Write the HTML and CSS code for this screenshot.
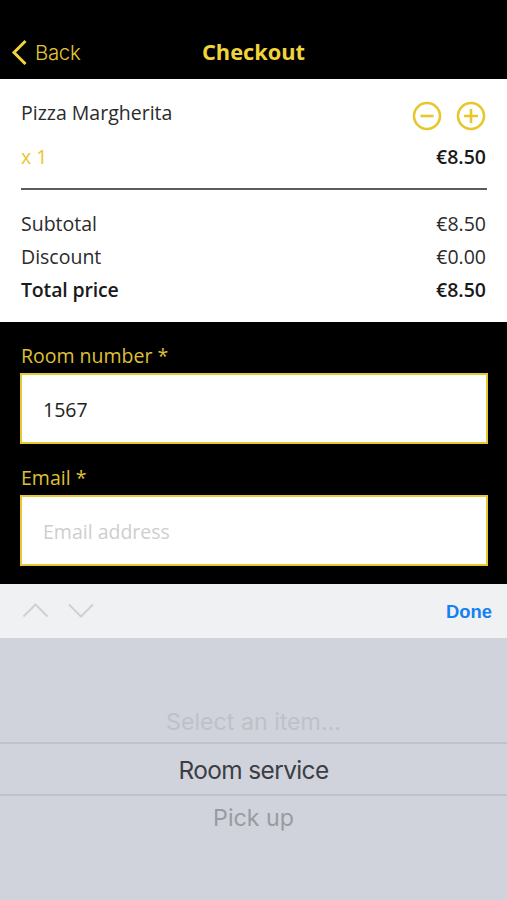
FILE: index.html
```
<!DOCTYPE html>
<html lang="en">
	<head>
		<meta charset="utf-8">
		<title>Checkout</title>
		<link rel="stylesheet" href="styles.css">
	</head>
	<body>
		<header>
			<a class="back" href="#">
				<svg width="16" height="26" viewBox="0 0 16 26"><path d="M14.5 2L3 13.5L14.5 25"/></svg>
				<span>Back</span>
			</a>
			<h1>Checkout</h1>
		</header>

		<section class="order">
			<div class="row item">
				<span>Pizza Margherita</span>
				<div class="amount">
					<svg width="30" height="30" viewBox="0 0 30 30"><circle cx="15" cy="15" r="13"/><path d="M8.5 15H21.5"/></svg>
					<svg width="30" height="30" viewBox="0 0 30 30"><circle cx="15" cy="15" r="13"/><path d="M8 15H22M15 8V22"/></svg>
				</div>
			</div>
			<div class="row price">
				<span class="count">x 1</span>
				<strong>€8.50</strong>
			</div>
			<div class="totals">
				<div class="row"><span>Subtotal</span><span>€8.50</span></div>
				<div class="row"><span>Discount</span><span>€0.00</span></div>
				<div class="row total"><span>Total price</span><span>€8.50</span></div>
			</div>
		</section>

		<form>
			<label for="room">Room number *</label>
			<input id="room" type="text" value="1567">
			<label for="email">Email *</label>
			<input id="email" type="email" placeholder="Email address">
		</form>

		<div class="toolbar">
			<svg width="74" height="18" viewBox="0 0 74 18"><path d="M1.5 14.5L13.5 2.5L25.5 14.5M47 2.5L59 14.5L71 2.5"/></svg>
			<span class="done">Done</span>
		</div>
		<div class="picker">
			<div class="option faded">Select an item...</div>
			<div class="option selected">Room service</div>
			<div class="option">Pick up</div>
		</div>
	</body>
</html>
```

FILE: styles.css
```
* {
	box-sizing: border-box;
}
body {
	margin: 0;
	height: 900px;
	overflow: hidden;
	display: flex;
	flex-direction: column;
	background-color: #000;
	color: #2b2b2b;
	font-family: "Open Sans", sans-serif;
	font-size: 19.5px;
}
svg {
	display: block;
	fill: none;
}
header {
	height: 79px;
	padding: 25px 11px 0px 11px;
	display: grid;
	grid-template-columns: 1fr auto 1fr;
	align-items: center;
	color: #f0d43a;
}
.back {
	display: flex;
	align-items: center;
	gap: 8px;
	color: #e3c638;
	font-family: Inter, sans-serif;
	font-size: 20.4px;
	font-weight: 300;
	letter-spacing: -0.3px;
	text-decoration: none;
}
.back svg {
	stroke: #f0d43a;
	stroke-width: 3;
}
h1 {
	margin: 0;
	padding-bottom: 1px;
	font-size: 21.8px;
	font-weight: 700;
}
.order {
	height: 243px;
	padding: 20px 21px 0px 21px;
	background-color: #fff;
}
.row {
	display: flex;
	justify-content: space-between;
	line-height: 33px;
}
.item {
	line-height: 28px;
}
.amount {
	display: flex;
	gap: 14px;
	padding-top: 2px;
}
.amount svg {
	stroke: #e8c62c;
	stroke-width: 2.6;
}
.price {
	margin-top: 9px;
}
.price strong, .total {
	color: #1a1a1a;
	font-weight: 600;
}
.total span:first-child {
	letter-spacing: -0.15px;
}
.count {
	color: #e8c62c;
}
.totals {
	margin: 15px -1px 0px 0px;
	padding: 17px 1px 0px 0px;
	border-top: 2px solid #5c5c5c;
}
form {
	height: 262px;
	padding: 20px 19px 0px 20px;
}
label {
	display: block;
	height: 31px;
	line-height: 28px;
	padding-left: 1px;
	color: #dfc134;
}
input {
	display: block;
	width: 100%;
	height: 71px;
	margin: 0px 0px 20px 0px;
	padding: 1px 20px 0px 21px;
	border: 2px solid #e5c832;
	border-radius: 0;
	background-color: #fff;
	color: #222;
	font: inherit;
}
input::placeholder {
	color: #cecece;
}
.toolbar {
	height: 54px;
	padding: 0px 15px 0px 22px;
	display: flex;
	align-items: center;
	justify-content: space-between;
	background-color: #eff1f3;
}
.toolbar svg {
	stroke: #cfd1d3;
	stroke-width: 2;
}
.done {
	padding-top: 2px;
	color: #1580f0;
	font: bold 18.4px "Liberation Sans", sans-serif;
}
.picker {
	flex: 1;
	padding-top: 61px;
	background-color: #d0d3db;
	font-family: Inter, sans-serif;
	font-size: 23.2px;
	text-align: center;
}
.option {
	height: 43px;
	line-height: 44px;
	color: #999ba0;
}
.faded {
	line-height: 46px;
	color: #bec1c7;
}
.selected {
	height: 54px;
	line-height: 52px;
	border-top: 2px solid #c0c2c8;
	border-bottom: 2px solid #c0c2c8;
	font-size: 24.4px;
	letter-spacing: -0.6px;
	color: #3c3e43;
}
```
